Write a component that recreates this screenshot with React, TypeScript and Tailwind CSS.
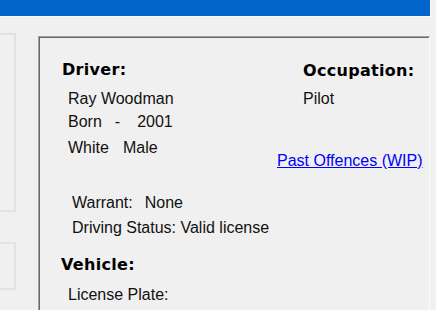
import React from 'react';

const sans = "font-['Liberation_Sans',Arial,sans-serif]";
const heading = "font-['DejaVu_Sans',Verdana,sans-serif] font-bold text-[16px] leading-5 tracking-[0.3px] text-black whitespace-nowrap";
const label = `${sans} text-[16px] leading-5 text-[#111] whitespace-nowrap`;

const App: React.FC = () => {
  return (
    <div className="w-[436px] h-[310px] overflow-hidden bg-[#f0f0f0] flex flex-col">
      {/* title strip */}
      <div className="h-[17px] w-[431px] border-r border-b border-[#fafafa]">
        <div className="h-[16px] w-[430px] bg-[#0064c8]" />
      </div>

      <div className="flex flex-1">
        {/* clipped side boxes */}
        <div className="w-[16px] flex flex-col">
          <div className="mt-[16px] h-[179px] border-2 border-l-0 border-[#e2e2e2]" />
          <div className="mt-[30px] h-[48px] border-2 border-l-0 border-[#e2e2e2]" />
        </div>

        {/* details panel */}
        <div className="ml-[22px] mt-[19px] w-[392px] shrink-0 border-t border-l border-r border-t-[#a0a0a0] border-l-[#a0a0a0] border-r-[#fcfcfc]">
          <div className="h-full border-t border-l border-[#696969] pl-[22px] pt-[22px] flex">
            {/* left column */}
            <div className="w-[215px] flex flex-col items-start">
              <div className={heading}>Driver:</div>
              <div className={`${label} mt-[9px] ml-[6px]`}>Ray Woodman</div>
              <div className={`${label} mt-[3px] ml-[6px]`}>
                <span>Born</span>
                <span className="ml-[13px]">-</span>
                <span className="ml-[17px]">2001</span>
              </div>
              <div className={`${label} mt-[6px] ml-[6px]`}>
                <span>White</span>
                <span className="ml-[14px]">Male</span>
              </div>
              <div className={`${label} mt-[35px] ml-[10px]`}>
                <span>Warrant:</span>
                <span className="ml-[12px]">None</span>
              </div>
              <div className={`${label} mt-[5px] ml-[10px]`}>Driving Status: Valid license</div>
              <div className={`${heading} mt-[17px] -ml-px`}>Vehicle:</div>
              <div className={`${label} mt-[10px] ml-[6px]`}>License Plate:</div>
            </div>

            {/* right column */}
            <div className="flex flex-col items-start">
              <div className={`${heading} mt-px ml-[26px]`}>Occupation:</div>
              <div className={`${label} mt-[8px] ml-[26px]`}>Pilot</div>
              <a href="#" className={`${sans} text-[16px] leading-5 text-[#0000ff] underline mt-[42px] whitespace-nowrap`}>
                Past Offences (WIP)
              </a>
            </div>
          </div>
        </div>
      </div>
    </div>
  );
};

export default App;
